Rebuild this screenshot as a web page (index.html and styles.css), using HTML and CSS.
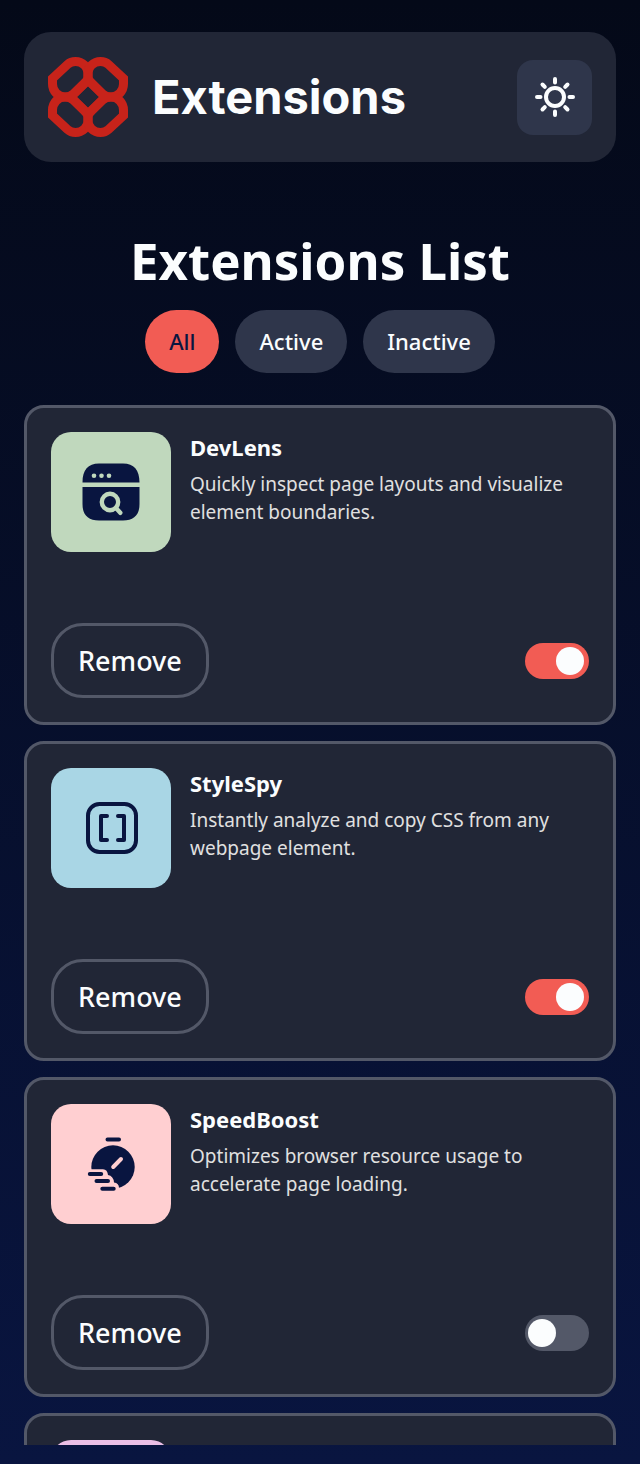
FILE: index.html
```html
<!DOCTYPE html>
<html lang="en">
<head>
<meta charset="utf-8">
<meta name="viewport" content="width=device-width, initial-scale=1">
<title>Extensions</title>
<link rel="stylesheet" href="styles.css">
</head>
<body>
<header class="topbar">
  <div class="brand">
    <svg class="brand-mark" viewBox="0 0 80 80" aria-hidden="true">
      <g fill="none" stroke="#c7231a" stroke-width="9">
        <path id="petal" d="M17 40C10 40 4.500 34 4.500 27V21.500L19.500 7.500C22 5.200 24.500 4.500 27.500 4.500C34.500 4.500 40 10 40 16V20C40 22 39 24 36.500 26.500L25.500 37C23 39 20.500 40 17 40Z"/>
        <use href="#petal" transform="translate(80 0) scale(-1 1)"/>
        <use href="#petal" transform="translate(0 80) scale(1 -1)"/>
        <use href="#petal" transform="translate(80 80) scale(-1 -1)"/>
        <path d="M40 22.500L57.500 40L40 57.500L22.500 40Z"/>
      </g>
    </svg>
    <span class="brand-name">Extensions</span>
  </div>
  <button class="theme-button" type="button" aria-label="Switch theme">
    <svg class="theme-icon" viewBox="0 0 40 40" aria-hidden="true">
      <g fill="none" stroke="#fbfdfe" stroke-width="4" stroke-linecap="round">
        <circle cx="20" cy="20" r="9"/>
        <path d="M20 2V5.500M20 34.500V38M2 20H5.500M34.500 20H38M7.500 7.500L9.800 9.800M30.200 30.200L32.500 32.500M32.500 7.500L30.200 9.800M9.800 30.200L7.500 32.500"/>
      </g>
    </svg>
  </button>
</header>
<main class="content">
  <h1 class="title">Extensions List</h1>
  <div class="filters">
    <button class="filter filter-active" type="button" aria-pressed="true">All</button>
    <button class="filter" type="button" aria-pressed="false">Active</button>
    <button class="filter" type="button" aria-pressed="false">Inactive</button>
  </div>
  <div class="list">
    <article class="card">
      <div class="card-info">
        <div class="tile tile-green">
          <svg class="tile-icon" viewBox="0 0 60 60" aria-hidden="true">
            <path fill="#091540" d="M1.500 20.500C1.500 8 7 1.500 18 1.500H42C53 1.500 58.500 8 58.500 20.500ZM1.500 25H58.500V42C58.500 53 53 58.500 42 58.500H18C7 58.500 1.500 53 1.500 42Z"/>
            <g fill="#c0d8bd"><circle cx="13" cy="13.700" r="2.300"/><circle cx="20.500" cy="13.700" r="2.300"/><circle cx="28" cy="13.700" r="2.300"/></g>
            <g fill="none" stroke="#c0d8bd" stroke-width="4.400" stroke-linecap="round"><circle cx="29" cy="40" r="8.200"/><path d="M35 46L39.300 50.800"/></g>
          </svg>
        </div>
        <div class="card-text">
          <h2 class="name">DevLens</h2>
          <p class="description">Quickly inspect page layouts and visualize element boundaries.</p>
        </div>
      </div>
      <div class="card-actions">
        <button class="remove" type="button">Remove</button>
        <input class="toggle" type="checkbox" role="switch" aria-label="DevLens enabled" checked>
      </div>
    </article>
    <article class="card">
      <div class="card-info">
        <div class="tile tile-blue">
          <svg class="tile-icon" viewBox="0 0 60 60" aria-hidden="true">
            <g fill="none" stroke="#091540" stroke-width="4" stroke-linecap="round" stroke-linejoin="round">
              <rect x="7" y="6" width="48" height="48" rx="11.500"/>
              <path d="M26 18H20V42H26M37 18H43V42H37"/>
            </g>
          </svg>
        </div>
        <div class="card-text">
          <h2 class="name">StyleSpy</h2>
          <p class="description">Instantly analyze and copy CSS from any webpage element.</p>
        </div>
      </div>
      <div class="card-actions">
        <button class="remove" type="button">Remove</button>
        <input class="toggle" type="checkbox" role="switch" aria-label="StyleSpy enabled" checked>
      </div>
    </article>
    <article class="card">
      <div class="card-info">
        <div class="tile tile-pink">
          <svg class="tile-icon" viewBox="0 0 60 60" aria-hidden="true">
            <circle cx="32" cy="33" r="21.700" fill="#091540"/>
            <path d="M0 35.200H22Q26.500 35.500 27 41Q32.500 42 33 48.500Q38 49 38 54L36 60H0Z" fill="#ffcfd1"/>
            <g fill="none" stroke="#091540" stroke-width="4" stroke-linecap="round">
              <path d="M26.500 5.500H38M8.800 40H20.200M15.500 47H27M21.300 54.700H32.700"/>
            </g>
            <path d="M32.200 33L40 25" fill="none" stroke="#ffcfd1" stroke-width="4" stroke-linecap="round"/>
          </svg>
        </div>
        <div class="card-text">
          <h2 class="name">SpeedBoost</h2>
          <p class="description">Optimizes browser resource usage to accelerate page loading.</p>
        </div>
      </div>
      <div class="card-actions">
        <button class="remove" type="button">Remove</button>
        <input class="toggle" type="checkbox" role="switch" aria-label="SpeedBoost enabled">
      </div>
    </article>
    <article class="card">
      <div class="card-info">
        <div class="tile tile-violet"></div>
      </div>
    </article>
  </div>
</main>
</body>
</html>
```
FILE: styles.css
```css
* {
  box-sizing: border-box;
}

body {
  display: flex;
  flex-direction: column;
  height: 100vh;
  margin: 0;
  padding: 32px 24px 19px;
  background: linear-gradient(180deg, #040918 0%, #091540 100%);
  color: #fbfdfe;
  font-family: "Noto Sans", sans-serif;
}

button {
  color: inherit;
  font-family: inherit;
  font-weight: 500;
  cursor: pointer;
}

.topbar {
  display: flex;
  align-items: center;
  justify-content: space-between;
  flex: none;
  padding: 25px 24px;
  border-radius: 27px;
  background: #212636;
}

.brand {
  display: flex;
  align-items: center;
  gap: 24px;
}

.brand-mark {
  display: block;
  width: 80px;
  height: 80px;
}

.brand-name {
  font-family: Inter, sans-serif;
  font-size: 47px;
  font-weight: 700;
  line-height: 60px;
}

.theme-button {
  display: grid;
  place-items: center;
  width: 75px;
  height: 75px;
  padding: 0;
  border: 0;
  border-radius: 16px;
  background: #2f364b;
}

.theme-icon {
  width: 40px;
  height: 40px;
}

.content {
  display: flex;
  flex: 1;
  flex-direction: column;
  min-height: 0;
  padding-top: 62px;
}

.title {
  margin: 0 0 14px;
  font-size: 51px;
  font-weight: 700;
  line-height: 72px;
  text-align: center;
}

.filters {
  display: flex;
  justify-content: center;
  gap: 16px;
  margin-bottom: 32px;
}

.filter {
  padding: 16px 24px;
  border: 0;
  border-radius: 32px;
  background: #2f364b;
  font-size: 22px;
  line-height: 31px;
}

.filter-active {
  background: #f25c54;
  color: #091540;
}

.list {
  display: flex;
  flex: 1;
  flex-direction: column;
  gap: 16px;
  min-height: 0;
  overflow: hidden;
}

.card {
  display: flex;
  flex: none;
  flex-direction: column;
  justify-content: space-between;
  min-height: 320px;
  padding: 24px;
  border: 3px solid #535868;
  border-radius: 20px;
  background: #212636;
}

.card-info {
  display: flex;
  gap: 19px;
}

.tile {
  display: grid;
  flex: none;
  place-items: center;
  width: 120px;
  height: 120px;
  border-radius: 20px;
}

.tile-green {
  background: #c0d8bd;
}

.tile-blue {
  background: #a9d6e5;
}

.tile-pink {
  background: #ffcfd1;
}

.tile-violet {
  background: #ebbfe6;
}

.tile-icon {
  width: 60px;
  height: 60px;
}

.name {
  margin: 0 0 8px;
  font-size: 22px;
  font-weight: 700;
  line-height: 30px;
}

.description {
  margin: 0;
  color: #e0e0e0;
  font-size: 19px;
  line-height: 28px;
}

.card-actions {
  display: flex;
  align-items: center;
  justify-content: space-between;
}

.remove {
  padding: 16px 24px;
  border: 3px solid #535868;
  border-radius: 32px;
  background: transparent;
  font-size: 27px;
  line-height: 37px;
}

.toggle {
  display: flex;
  align-items: center;
  width: 64px;
  height: 36px;
  margin: 0;
  padding: 0 3px;
  appearance: none;
  border-radius: 18px;
  background: #535868;
  cursor: pointer;
}

.toggle::before {
  width: 28px;
  height: 28px;
  border-radius: 50%;
  background: #fbfdfe;
  content: "";
}

.toggle:checked {
  justify-content: flex-end;
  padding-right: 5px;
  background: #f25c54;
}
```
